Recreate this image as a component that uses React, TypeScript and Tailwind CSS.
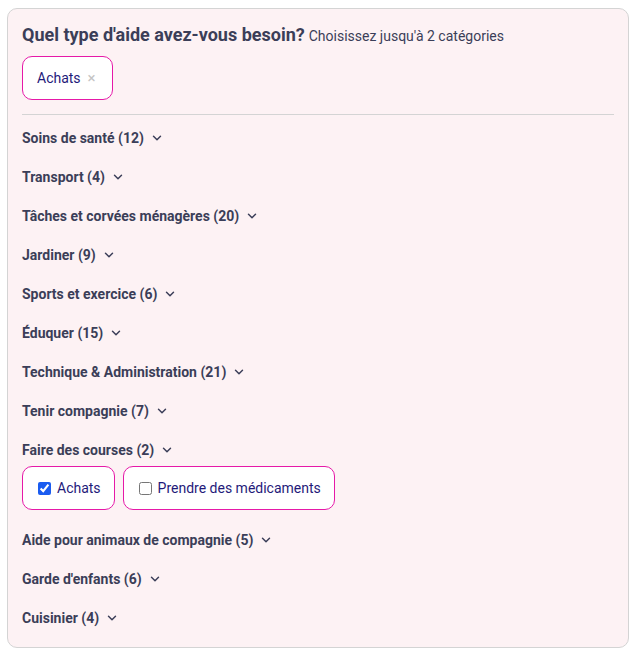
import { ChevronDown } from 'lucide-react';

const categories = [
  { name: 'Soins de santé', count: 12 },
  { name: 'Transport', count: 4 },
  { name: 'Tâches et corvées ménagères', count: 20 },
  { name: 'Jardiner', count: 9 },
  { name: 'Sports et exercice', count: 6 },
  { name: 'Éduquer', count: 15 },
  { name: 'Technique & Administration', count: 21 },
  { name: 'Tenir compagnie', count: 7 },
  { name: 'Faire des courses', count: 2, open: true },
  { name: 'Aide pour animaux de compagnie', count: 5 },
  { name: "Garde d'enfants", count: 6 },
  { name: 'Cuisinier', count: 4 },
];

const options = [
  { label: 'Achats', checked: true },
  { label: 'Prendre des médicaments', checked: false },
];

export default function App() {
  return (
    <div className="min-h-[663px] bg-white pt-[8px] pl-[7px] font-['Roboto',sans-serif]">
      <div className="w-[622px] rounded-[10px] border border-[#d4d4d4] bg-[#fdf2f4] px-[14px] pt-[14px] pb-[19px]">
        {/* Titre */}
        <div className="flex items-baseline gap-[4px] h-[24px]">
          <h2 className="text-[18px] leading-[24px] font-bold text-[#3b3e58]">
            Quel type d'aide avez-vous besoin?
          </h2>
          <span className="text-[14px] text-[#3b3e58]">Choisissez jusqu'à 2 catégories</span>
        </div>

        {/* Sélection */}
        <div className="mt-[9px] flex">
          <div className="flex h-[44px] items-center gap-[7px] rounded-[10px] border border-[#e619a8] bg-white pl-[14px] pr-[16px]">
            <span className="text-[14px] text-[#1f1a7a]">Achats</span>
            <span className="text-[15px] leading-none text-[#c4c4c4]">×</span>
          </div>
        </div>

        <div className="mt-[14px] h-px bg-[#d4d4d4]" />

        {/* Catégories */}
        <div className="mt-[13px] flex flex-col gap-[19px]">
          {categories.map((cat) => (
            <div key={cat.name}>
              <div className="flex h-[20px] items-center gap-[6px]">
                <span className="text-[14px] font-bold text-[#3b3e58]">
                  {cat.name} ({cat.count})
                </span>
                <ChevronDown size={14} strokeWidth={2.5} className="text-[#3b3e58]" />
              </div>
              {cat.open && (
                <div className="mt-[6px] mb-[1px] flex gap-[8px]">
                  {options.map((opt) => (
                    <label
                      key={opt.label}
                      className="flex h-[44px] items-center gap-[6px] rounded-[10px] border border-[#e619a8] bg-white pl-[15px] pr-[13px]"
                    >
                      <input
                        type="checkbox"
                        defaultChecked={opt.checked}
                        className="m-0 h-[13px] w-[13px] accent-[#1a5cf0]"
                      />
                      <span className="text-[14px] text-[#1f1a7a]">{opt.label}</span>
                    </label>
                  ))}
                </div>
              )}
            </div>
          ))}
        </div>
      </div>
    </div>
  );
}
